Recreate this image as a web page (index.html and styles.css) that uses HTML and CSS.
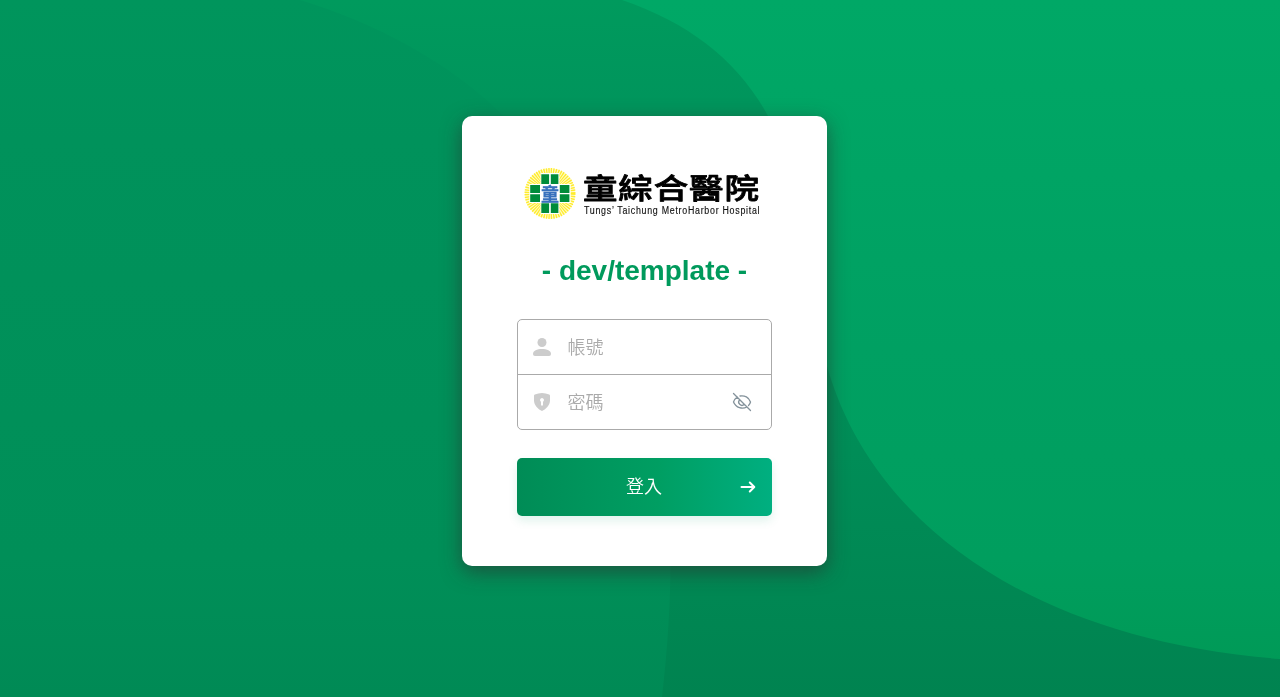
FILE: index.html
```html
<!DOCTYPE html>
<html lang="zh-Hant">
<head>
<meta charset="utf-8">
<title>童綜合醫院</title>
<link rel="stylesheet" href="styles.css">
</head>
<body>
<svg class="backdrop" viewBox="0 0 1280 697" preserveAspectRatio="none" aria-hidden="true">
  <defs>
    <linearGradient id="bgRight" x1="0" y1="0" x2="0" y2="1"><stop offset="0" stop-color="#00a866"/><stop offset=".5" stop-color="#00a062"/><stop offset=".8" stop-color="#009e5e"/><stop offset=".95" stop-color="#009a57"/></linearGradient>
    <linearGradient id="bgMiddle" x1="0" y1="0" x2="0" y2="1"><stop offset="0" stop-color="#009a5d"/><stop offset=".15" stop-color="#00955c"/><stop offset=".65" stop-color="#008d57"/><stop offset="1" stop-color="#008350"/></linearGradient>
    <linearGradient id="bgLeft" x1="0" y1="0" x2="0" y2="1"><stop offset="0" stop-color="#00955c"/><stop offset=".2" stop-color="#00925b"/><stop offset=".8" stop-color="#008f58"/><stop offset="1" stop-color="#008a55"/></linearGradient>
  </defs>
  <rect width="1280" height="697" fill="url(#bgRight)"/>
  <path fill="url(#bgMiddle)" d="M0 0H622C690 23 739 62 768 116C812 199 800 278 827 366C871 523 1031 640 1280 659V697H0Z"/>
  <path fill="url(#bgLeft)" d="M0 0H300C375 23 448 61 504 116C620 224 697 398 662 697H0Z"/>
</svg>
<main class="login">
  <form class="card">
    <svg class="brand" viewBox="0 0 240 56" role="img" aria-label="童綜合醫院">
      <circle cx="28" cy="27.500" r="17" fill="none" stroke="#fffbd0" stroke-width="16"/>
      <circle cx="28" cy="27.500" r="17.500" fill="none" stroke="#ffec2e" stroke-width="16" stroke-dasharray="1.050 .783"/>
      <path fill="#fff" d="M18.500 7H37.400V18H48.700V37H37.400V48H18.500V37H7.300V18H18.500Z"/>
      <path fill="#008c3a" d="M19.300 8.200h7.800v9.800h-7.800zM28.800 8.200h7.600v9.800h-7.600zM8.200 19h9.800v8H8.200zM8.200 28.300h9.800v7.700H8.200zM37.800 19h9.600v8h-9.600zM37.800 28.300h9.600v7.700h-9.600zM19.300 37.300h7.800v9.700h-7.800zM28.800 37.300h7.600v9.700h-7.600z"/>
      <text class="brand-emblem" x="18.900" y="34.500">童</text>
      <text class="brand-name" transform="translate(61 32.800) scale(1 .84)" x="0" y="0" textLength="176">童綜合醫院</text>
      <text class="brand-latin" transform="translate(62 47.500) scale(.77 1)" x="0" y="0" textLength="228" lengthAdjust="spacing">Tungs’ Taichung MetroHarbor Hospital</text>
    </svg>
    <h1 class="title">- dev/template -</h1>
    <div class="fields">
      <label class="field">
        <svg class="icon" viewBox="0 0 20 20"><circle cx="10" cy="5.500" r="4.500"/><path d="M1 17C1 13.800 5 12 10 12s9 1.800 9 5q0 2-2 2H3Q1 19 1 17Z"/></svg>
        <input class="input" type="text" placeholder="帳號">
      </label>
      <label class="field">
        <svg class="icon" viewBox="0 0 20 20"><path fill-rule="evenodd" d="M2 3.700Q2 2.900 2.800 2.600Q10-.4 17.200 2.600Q18 2.900 18 3.700V8.500C18 13.500 13.500 17.500 10 19C6.500 17.500 2 13.500 2 8.500ZM10 6A2 2 0 0 0 9 9.700v3.800h2V9.700A2 2 0 0 0 10 6Z"/></svg>
        <input class="input" type="password" placeholder="密碼">
        <svg class="eye" viewBox="0 0 20 20"><path d="M1.500 1.500L18.500 18.500M5.200 5Q2.500 7 1.500 10C4 16 10.500 17.500 14.800 15M8 4C12.500 3.200 17 5.200 18.500 10Q18 12 16.500 13.500M7.700 7.700A3.200 3.200 0 0 0 12.300 12.300"/></svg>
      </label>
    </div>
    <button class="submit" type="button"><span class="submit-label">登入</span>
      <svg class="arrow" viewBox="0 0 16 14"><path d="M1.500 7H14M9.800 2.500L14.300 7L9.800 11.500"/></svg>
    </button>
  </form>
</main>
</body>
</html>
```
FILE: styles.css
```css
* { box-sizing: border-box; }
html, body { height: 100%; }
body { margin: 0; overflow: hidden; background: #00a062; font-family: "Liberation Sans", "Noto Sans CJK TC", sans-serif; }
.backdrop { position: fixed; inset: 0; width: 100%; height: 100%; z-index: -1; }
.login { display: flex; justify-content: center; padding: 116px 0 0 9px; }
.card { width: 365px; height: 450px; padding: 50px 55px; display: flex; flex-direction: column; background: #fff; border-radius: 10px; box-shadow: 0 6px 20px rgba(45, 45, 45, .6); }
.brand { width: 240px; height: 56px; margin-left: 5px; flex: none; overflow: visible; }
.brand-emblem { font: 700 18px "Noto Sans CJK TC", sans-serif; fill: #3871bd; stroke: #3871bd; stroke-width: .3px; }
.brand-name { font: 500 34.500px "Noto Sans CJK TC", sans-serif; fill: #000; stroke: #000; stroke-width: 1px; stroke-linejoin: round; }
.brand-latin { font: 11.500px "Liberation Sans", sans-serif; fill: #111; stroke: #111; stroke-width: .15px; }
.title { margin: 32px 0 0; height: 34px; font-size: 28px; line-height: 34px; font-weight: 700; text-align: center; color: #009a5c; white-space: nowrap; }
.fields { margin-top: 31px; border: 1px solid #aaa; border-radius: 5px; height: 111px; flex: none; }
.field { display: flex; align-items: center; height: 54px; padding: 0 19px 0 14px; }
.field + .field { border-top: 1px solid #aaa; height: 55px; }
.icon { width: 20px; height: 20px; fill: #ccc; flex: none; }
.input { flex: 1; min-width: 0; margin-left: 15.500px; padding: 2px 0 0; border: 0; outline: 0; background: none; font: 350 18px/26px "Liberation Sans", "Noto Sans CJK TC", sans-serif; color: #333; }
.input::placeholder { color: #aaa; opacity: 1; }
.eye { width: 20px; height: 20px; flex: none; fill: none; stroke: #84929b; stroke-width: 1.300; stroke-linecap: round; }
.submit { margin-top: 28px; height: 58px; padding: 0 16px; display: grid; grid-template-columns: 16px 1fr 16px; align-items: center; border: 0; border-radius: 5px; background: linear-gradient(90deg, #008c56, #009e62 55%, #00af80); box-shadow: 0 5px 10px rgba(0, 154, 105, .12); color: #fff; font: 350 18px/26px "Liberation Sans", "Noto Sans CJK TC", sans-serif; }
.submit-label { grid-column: 2; text-align: center; padding-right: 1px; }
.arrow { width: 16px; height: 14px; fill: none; stroke: #fff; stroke-width: 2; stroke-linecap: round; stroke-linejoin: round; }
```
